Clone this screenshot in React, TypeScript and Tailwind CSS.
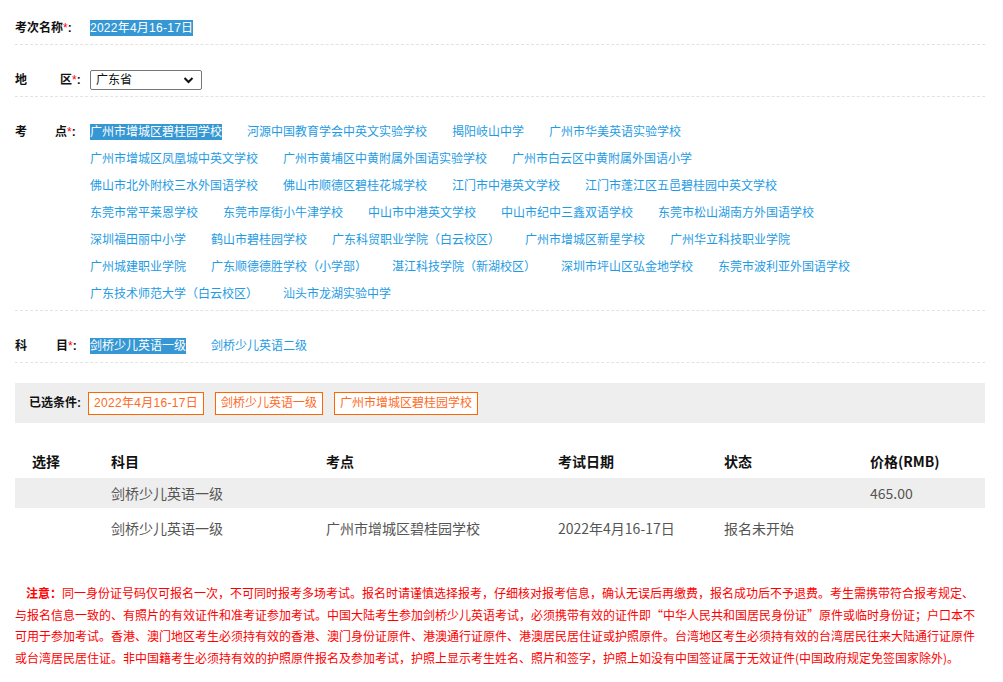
import React from "react";

const sites = [
  "广州市增城区碧桂园学校",
  "河源中国教育学会中英文实验学校",
  "揭阳岐山中学",
  "广州市华美英语实验学校",
  "广州市增城区凤凰城中英文学校",
  "广州市黄埔区中黄附属外国语实验学校",
  "广州市白云区中黄附属外国语小学",
  "佛山市北外附校三水外国语学校",
  "佛山市顺德区碧桂花城学校",
  "江门市中港英文学校",
  "江门市蓬江区五邑碧桂园中英文学校",
  "东莞市常平莱恩学校",
  "东莞市厚街小牛津学校",
  "中山市中港英文学校",
  "中山市纪中三鑫双语学校",
  "东莞市松山湖南方外国语学校",
  "深圳福田丽中小学",
  "鹤山市碧桂园学校",
  "广东科贸职业学院（白云校区）",
  "广州市增城区新星学校",
  "广州华立科技职业学院",
  "广州城建职业学院",
  "广东顺德德胜学校（小学部）",
  "湛江科技学院（新湖校区）",
  "深圳市坪山区弘金地学校",
  "东莞市波利亚外国语学校",
  "广东技术师范大学（白云校区）",
  "汕头市龙湖实验中学",
];

const Star = () => (
  <>
    <span className="text-[#ff0000] font-normal">*</span>:
  </>
);

const Row = ({
  label,
  children,
  first,
}: {
  label: React.ReactNode;
  children: React.ReactNode;
  first?: boolean;
}) => (
  <div
    className={
      "flex items-start border-b border-dashed border-[#e3e3e3] pb-[8px] " +
      (first ? "pt-[20px]" : "pt-[27px]")
    }
  >
    <div className="w-[75px] shrink-0 flex h-[16px] items-center font-bold text-[#111]">{label}</div>
    <div className="flex-1">{children}</div>
  </div>
);

const Selected = ({ children }: { children: React.ReactNode }) => (
  <span className="inline-flex h-[16px] items-center bg-[#3597d3] text-white">{children}</span>
);

const cols = "grid grid-cols-[96px_215px_232px_166px_146px_115px]";

export default function App() {
  return (
    <div className="w-[1003px] min-h-[682px] bg-white text-[12px] leading-[16px] font-['Liberation_Sans','Noto_Sans_CJK_SC',sans-serif]">
      <div className="ml-[15px] w-[970px]">
        <Row first label={<span>考次名称<Star /></span>}>
          <div className="flex">
            <Selected>
              <span className="tracking-[0.25px]">2022年4月16-17日</span>
            </Selected>
          </div>
        </Row>

        <Row
          label={
            <>
              <span>地</span>
              <span className="ml-[33px]">区<Star /></span>
            </>
          }
        >
          <div className="-my-[2px] flex h-[20px] w-[112px] items-center justify-between rounded-[2px] border border-[#767676] pl-[5px] pr-[7px] text-[#111]">
            <span>广东省</span>
            <svg width="11" height="8" viewBox="0 0 11 8">
              <path d="M1.5 2 L5.5 6 L9.5 2" fill="none" stroke="#111" strokeWidth="2" />
            </svg>
          </div>
        </Row>

        <Row
          label={
            <>
              <span>考</span>
              <span className="ml-[28px]">点<Star /></span>
            </>
          }
        >
          <div className="flex w-[800px] flex-wrap gap-y-[11px]">
            {sites.map((s, i) => (
              <div key={s} className="mr-[25px] flex h-[16px] items-center">
                {i === 0 ? <Selected>{s}</Selected> : <span className="text-[#1e9be3]">{s}</span>}
              </div>
            ))}
          </div>
        </Row>

        <Row
          label={
            <>
              <span>科</span>
              <span className="ml-[29px]">目<Star /></span>
            </>
          }
        >
          <div className="flex h-[16px]">
            <span className="mr-[25px] flex">
              <Selected>剑桥少儿英语一级</Selected>
            </span>
            <span className="flex h-[16px] items-center text-[#1e9be3]">剑桥少儿英语二级</span>
          </div>
        </Row>

        {/* 已选条件 */}
        <div className="mt-[20px] flex h-[40px] items-center bg-[#eeeeee] px-[14px]">
          <span className="font-bold text-[#111]">已选条件:</span>
          <div className="ml-[7px] flex gap-[11px]">
            {["2022年4月16-17日", "剑桥少儿英语一级", "广州市增城区碧桂园学校"].map((t, i) => (
              <span
                key={t}
                className={
                  "flex h-[23px] items-center border border-[#ff6600] bg-white px-[5px] text-[#ff6a1f] " +
                  (i === 0 ? "tracking-[0.3px]" : "")
                }
              >
                {t}
              </span>
            ))}
          </div>
        </div>

        {/* table */}
        <div className="mt-[20px] text-[14px] leading-[20px] font-['Noto_Sans_CJK_SC',sans-serif]">
          <div className={cols + " h-[35px] items-center font-bold text-[#111]"}>
            <span className="pl-[17px]">选择</span>
            <span>科目</span>
            <span>考点</span>
            <span>考试日期</span>
            <span>状态</span>
            <span>价格(RMB)</span>
          </div>
          <div className={cols + " h-[30px] items-center bg-[#eeeeee] text-[#555]"}>
            <span />
            <span>剑桥少儿英语一级</span>
            <span />
            <span />
            <span />
            <span>465.00</span>
          </div>
          <div className={cols + " h-[40px] items-center text-[#555]"}>
            <span />
            <span>剑桥少儿英语一级</span>
            <span>广州市增城区碧桂园学校</span>
            <span>2022年4月16-17日</span>
            <span>报名未开始</span>
            <span />
          </div>
        </div>

        {/* notice */}
        <div className="mt-[34px] pb-[14px] text-[12px] leading-[21.5px] text-[#ff0000] font-['Noto_Sans_CJK_SC',sans-serif] whitespace-nowrap">
          <div className="pl-[11px]">
            <span className="font-bold">注意：</span>
            同一身份证号码仅可报名一次，不可同时报考多场考试。报名时请谨慎选择报考，仔细核对报考信息，确认无误后再缴费，报名成功后不予退费。考生需携带符合报考规定、
          </div>
          <div>
            与报名信息一致的、有照片的有效证件和准考证参加考试。中国大陆考生参加剑桥少儿英语考试，必须携带有效的证件即“中华人民共和国居民身份证”原件或临时身份证；户口本不
          </div>
          <div>
            可用于参加考试。香港、澳门地区考生必须持有效的香港、澳门身份证原件、港澳通行证原件、港澳居民居住证或护照原件。台湾地区考生必须持有效的台湾居民往来大陆通行证原件
          </div>
          <div>
            或台湾居民居住证。非中国籍考生必须持有效的护照原件报名及参加考试，护照上显示考生姓名、照片和签字，护照上如没有中国签证属于无效证件(中国政府规定免签国家除外)。
          </div>
        </div>
      </div>
    </div>
  );
}
